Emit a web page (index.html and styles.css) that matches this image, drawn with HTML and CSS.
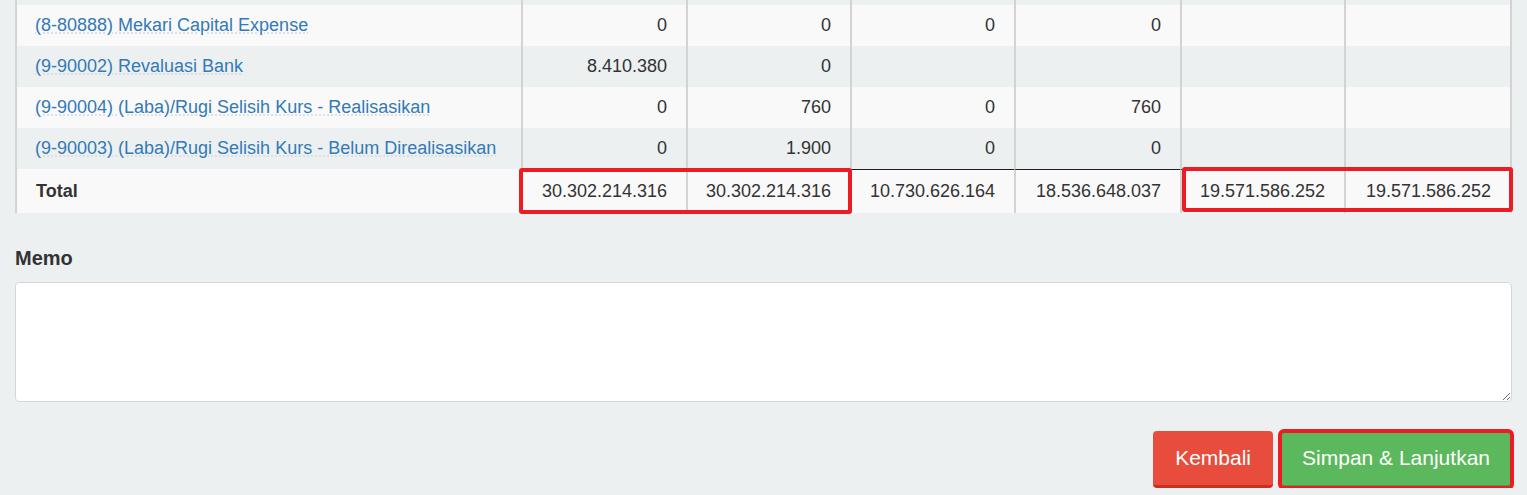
FILE: index.html
```html
<!DOCTYPE html>
<html lang="id">
<head>
<meta charset="utf-8">
<title>Jurnal Penyesuaian</title>
<link rel="stylesheet" href="styles.css">
</head>
<body>
<div class="page">
  <div class="table">
    <div class="row row-even row-cut">
      <div class="cell cell-name"></div>
      <div class="cell num"></div>
      <div class="cell num"></div>
      <div class="cell num"></div>
      <div class="cell num"></div>
      <div class="cell num"></div>
      <div class="cell num cell-last"></div>
    </div>
    <div class="row row-odd">
      <div class="cell cell-name"><a class="acct" href="#">(8-80888) Mekari Capital Expense</a></div>
      <div class="cell num">0</div>
      <div class="cell num">0</div>
      <div class="cell num">0</div>
      <div class="cell num">0</div>
      <div class="cell num"></div>
      <div class="cell num cell-last"></div>
    </div>
    <div class="row row-even">
      <div class="cell cell-name"><a class="acct" href="#">(9-90002) Revaluasi Bank</a></div>
      <div class="cell num">8.410.380</div>
      <div class="cell num">0</div>
      <div class="cell num"></div>
      <div class="cell num"></div>
      <div class="cell num"></div>
      <div class="cell num cell-last"></div>
    </div>
    <div class="row row-odd">
      <div class="cell cell-name"><a class="acct" href="#">(9-90004) (Laba)/Rugi Selisih Kurs - Realisasikan</a></div>
      <div class="cell num">0</div>
      <div class="cell num">760</div>
      <div class="cell num">0</div>
      <div class="cell num">760</div>
      <div class="cell num"></div>
      <div class="cell num cell-last"></div>
    </div>
    <div class="row row-even">
      <div class="cell cell-name"><a class="acct" href="#">(9-90003) (Laba)/Rugi Selisih Kurs - Belum Direalisasikan</a></div>
      <div class="cell num">0</div>
      <div class="cell num">1.900</div>
      <div class="cell num">0</div>
      <div class="cell num">0</div>
      <div class="cell num"></div>
      <div class="cell num cell-last"></div>
    </div>
    <div class="row row-total">
      <div class="cell cell-name total-label">Total</div>
      <div class="highlight hl-start">
        <div class="cell num sum">30.302.214.316</div>
        <div class="cell num sum">30.302.214.316</div>
      </div>
      <div class="cell num sum">10.730.626.164</div>
      <div class="cell num sum">18.536.648.037</div>
      <div class="highlight hl-end">
        <div class="cell num sum">19.571.586.252</div>
        <div class="cell num sum cell-last">19.571.586.252</div>
      </div>
    </div>
  </div>

  <label class="memo-label" for="memo">Memo</label>
  <textarea class="memo" id="memo"></textarea>

  <div class="actions">
    <button class="btn btn-back" type="button">Kembali</button>
    <button class="btn btn-save" type="button">Simpan &amp; Lanjutkan</button>
  </div>
</div>
</body>
</html>
```

FILE: styles.css
```css
html, body {
  margin: 0;
  padding: 0;
}

body {
  background: #ecf0f1;
  font-family: "Liberation Sans", Arial, sans-serif;
  font-size: 18px;
  color: #333;
}

.page {
  padding: 0 15px;
}

.table {
  display: flex;
  flex-direction: column;
}

.row {
  display: grid;
  grid-template-columns: 506px 165px 164px 164px 166px 164px 1fr;
  height: 41px;
}

.row-cut {
  height: 5px;
  overflow: hidden;
}

.row-odd {
  background: #f9f9f9;
}

.row-even {
  background: #ecf0f1;
}

.row-total {
  background: #f9f9f9;
  height: 44px;
}

.cell {
  box-sizing: border-box;
  border-left: 2px solid #d3d3d3;
  padding: 0 19px 0 18px;
  display: flex;
  align-items: center;
  white-space: nowrap;
}

.cell-last {
  border-right: 2px solid #d3d3d3;
}

.num {
  justify-content: flex-end;
}

.sum {
  border-top: 1px solid #1f1f1f;
}

.acct {
  color: #337ab7;
  text-decoration-line: underline;
  text-decoration-style: dotted;
  text-decoration-color: #dadde0;
  text-underline-offset: 2px;
}

.total-label {
  font-weight: bold;
  padding-left: 19px;
}

.highlight {
  display: grid;
  grid-column: span 2;
  position: relative;
}

.hl-start {
  grid-template-columns: 165px 164px;
}

.hl-end {
  grid-template-columns: 164px 1fr;
}

.highlight::after {
  content: "";
  position: absolute;
  border: 4px solid #ed1c24;
  border-radius: 3px;
  pointer-events: none;
}

.hl-start::after {
  top: -1px;
  bottom: -1px;
  left: -2px;
  right: -2px;
}

.hl-end::after {
  top: -2px;
  bottom: 1px;
  left: 2px;
  right: -1px;
}

.memo-label {
  display: block;
  margin: 33px 0 12px;
  font-size: 20px;
  line-height: 24px;
  font-weight: bold;
  color: #333;
}

.memo {
  display: block;
  box-sizing: border-box;
  width: 100%;
  height: 120px;
  margin: 0;
  border: 1px solid #d2d6de;
  border-radius: 4px;
  background: #fff;
  resize: both;
  font-family: "Liberation Sans", Arial, sans-serif;
  font-size: 18px;
}

.actions {
  display: flex;
  justify-content: flex-end;
  gap: 7px;
  margin-top: 29px;
}

.btn {
  box-sizing: border-box;
  height: 57px;
  padding: 0 22px;
  border: 0;
  border-bottom: 3px solid;
  border-radius: 4px;
  font-family: "Liberation Sans", Arial, sans-serif;
  font-size: 21px;
  color: #fff;
  cursor: pointer;
}

.btn-back {
  background: #e74c3c;
  border-bottom-color: #cc2f1f;
}

.btn-save {
  background: #5cb85c;
  border-bottom-color: #479f47;
  outline: 4px solid #ed1c24;
  outline-offset: -2px;
}
```
